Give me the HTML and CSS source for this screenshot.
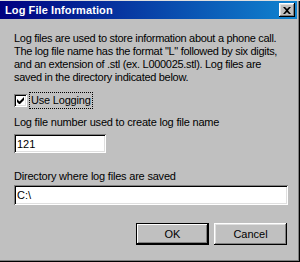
FILE: index.html
```html
<!DOCTYPE html>
<html lang="en">
<head>
    <meta charset="UTF-8">
    <title>Log File Information</title>
    <link rel="stylesheet" href="styles.css">
</head>
<body>
    <div class="window">
        <div class="titlebar">
            <span class="title">Log File Information</span>
            <button class="close-btn" aria-label="Close">
                <svg width="8" height="7" viewBox="0 0 8 7"><path d="M0 0h2l2 2 2-2h2L5 3.5 8 7H6L4 5 2 7H0l3-3.5z" fill="#000"/></svg>
            </button>
        </div>
        <div class="dialog-body">
            <p class="intro">Log files are used to store information about a phone call.<br>The log file name has the format "L" followed by six digits,<br>and an extension of .stl (ex. L000025.stl). Log files are<br>saved in the directory indicated below.</p>
            <label class="check-row">
                <span class="checkbox">
                    <svg width="7" height="7" viewBox="0 0 7 7"><path d="M0 2v3l2 2h1l4-4V0L2.5 4.5z" fill="#000"/></svg>
                </span>
                <span class="focus-label">Use Logging</span>
            </label>
            <div class="field">
                <div class="field-label">Log file number used to create log file name</div>
                <input class="edit edit-short" type="text" value="121">
            </div>
            <div class="field field-dir">
                <div class="field-label">Directory where log files are saved</div>
                <input class="edit edit-wide" type="text" value="C:\">
            </div>
            <div class="buttons">
                <button class="btn btn-default">OK</button>
                <button class="btn">Cancel</button>
            </div>
        </div>
    </div>
</body>
</html>
```

FILE: styles.css
```css
/* Win9x style dialog */
body {
    margin: 0;
    padding: 0;
    font-family: "Liberation Sans", Arial, sans-serif;
    font-size: 11px;
    background-color: #c0c0c0;
}

.window {
    width: 300px;
    height: 262px;
    box-sizing: border-box;
    background-color: #c0c0c0;
    border-top: 1px solid #dfdfdf;
    padding-right: 3px;
    box-shadow: inset -1px -1px #000, inset -2px -2px #808080;
}

.titlebar {
    height: 18px;
    display: flex;
    align-items: center;
    justify-content: space-between;
    padding: 0 2px 0 5px;
    background: linear-gradient(to right, #000080, #1084d0);
}

.title {
    color: #fff;
    font-weight: bold;
    font-size: 11px;
    letter-spacing: 0.1px;
}

.close-btn {
    width: 16px;
    height: 14px;
    padding: 0;
    border: none;
    background-color: #c0c0c0;
    display: flex;
    align-items: center;
    justify-content: center;
    box-shadow: inset -1px -1px #000, inset 1px 1px #fff, inset -2px -2px #808080, inset 2px 2px #dfdfdf;
}

.dialog-body {
    padding: 13px 10px 0 14px;
    color: #000;
}

.intro {
    margin: 0;
    line-height: 13px;
    letter-spacing: -0.3px;
}

.check-row {
    display: flex;
    align-items: center;
    margin-top: 8px;
}

.checkbox {
    width: 13px;
    height: 13px;
    box-sizing: border-box;
    background-color: #fff;
    display: flex;
    align-items: center;
    justify-content: center;
    box-shadow: inset 1px 1px #808080, inset -1px -1px #fff, inset 2px 2px #000, inset -2px -2px #dfdfdf;
}

.focus-label {
    margin-left: 2px;
    padding: 1px 1px;
    border: 1px dotted #000;
    line-height: 13px;
    letter-spacing: -0.2px;
}

.field {
    margin-top: 7px;
}

.field-dir {
    margin-top: 17px;
}

.field-label {
    line-height: 13px;
    letter-spacing: -0.2px;
}

.edit {
    display: block;
    height: 19px;
    box-sizing: border-box;
    margin: 5px 0 0 0;
    padding: 0 3px;
    border: none;
    outline: none;
    background-color: #fff;
    font-family: "Liberation Sans", Arial, sans-serif;
    font-size: 11px;
    color: #000;
    box-shadow: inset 1px 1px #808080, inset -1px -1px #fff, inset 2px 2px #000, inset -2px -2px #dfdfdf;
}

.edit-short {
    width: 92px;
}

.edit-wide {
    width: 274px;
    height: 20px;
    margin-top: 2px;
}

.buttons {
    display: flex;
    justify-content: flex-end;
    gap: 5px;
    margin-top: 18px;
}

.btn {
    width: 73px;
    height: 22px;
    padding: 0;
    border: none;
    background-color: #c0c0c0;
    font-family: "Liberation Sans", Arial, sans-serif;
    font-size: 11px;
    color: #000;
    box-shadow: inset -1px -1px #000, inset 1px 1px #fff, inset -2px -2px #808080, inset 2px 2px #dfdfdf;
}

.btn-default {
    box-shadow: inset 0 0 0 1px #000, inset -2px -2px #000, inset 2px 2px #fff, inset -3px -3px #808080;
}
```
